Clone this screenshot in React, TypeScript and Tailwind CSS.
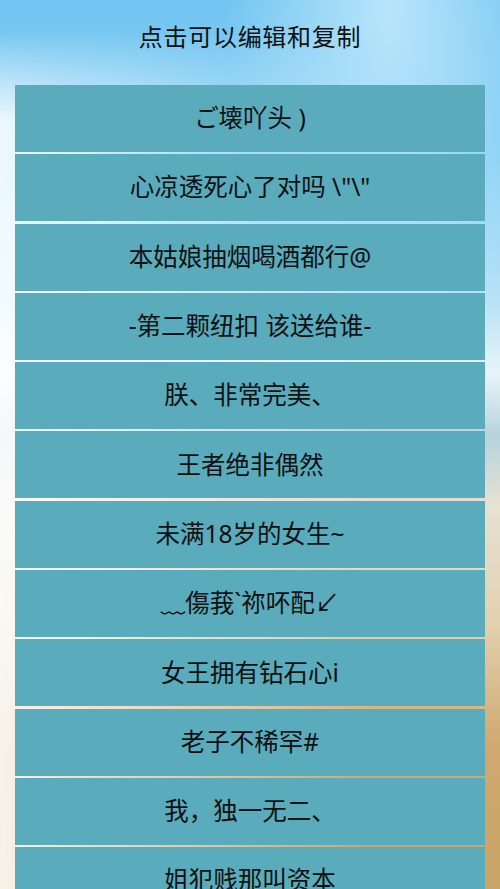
import React from 'react';

const items = [
  'ご壊吖头 )',
  '心凉透死心了对吗 \\"\\"',
  '本姑娘抽烟喝酒都行@',
  '-第二颗纽扣 该送给谁-',
  '朕、非常完美、',
  '王者绝非偶然',
  '未满18岁的女生~',
  '﹏傷莪`祢吥配↙',
  '女王拥有钻石心i',
  '老子不稀罕#',
  '我，独一无二、',
  '姐犯贱那叫资本',
];

export default function App() {
  return (
    <div
      className="relative w-[500px] h-[889px] overflow-hidden bg-[linear-gradient(180deg,#72c5f1_0%,#86cff5_18%,#b9e2f7_34%,#e8f4f9_42%,#b7d3de_49%,#e7e1d1_57%,#e2d1b0_70%,#cfa96f_84%,#c8a468_100%)]"
      style={{ fontFamily: '"Noto Sans", "Noto Sans CJK SC", sans-serif' }}
    >
      {/* hazy light from the left side of the backdrop */}
      <div className="pointer-events-none absolute left-0 right-0 top-[30px] bottom-0 bg-[linear-gradient(90deg,rgba(255,255,255,0.85)_0%,rgba(255,255,255,0.45)_35%,rgba(255,255,255,0)_75%)] [mask-image:linear-gradient(180deg,transparent_0px,black_90px)]" />
      <div className="pointer-events-none absolute inset-0 bg-[radial-gradient(ellipse_at_78%_0%,rgba(215,242,255,0.7),rgba(255,255,255,0)_30%)]" />

      <div className="relative flex flex-col">
        <div className="h-[85px] flex items-center justify-center pb-[11px]">
          <span className="text-[24px] text-[#111] tracking-[0.7px]">点击可以编辑和复制</span>
        </div>
        <div className="flex flex-col gap-[2.3px] px-[15px]">
          {items.map((t) => (
            <div
              key={t}
              className="h-[67px] bg-[#5aabbc] flex items-center justify-center text-[24.5px] text-[#111] whitespace-pre"
            >
              {t}
            </div>
          ))}
        </div>
      </div>
    </div>
  );
}
